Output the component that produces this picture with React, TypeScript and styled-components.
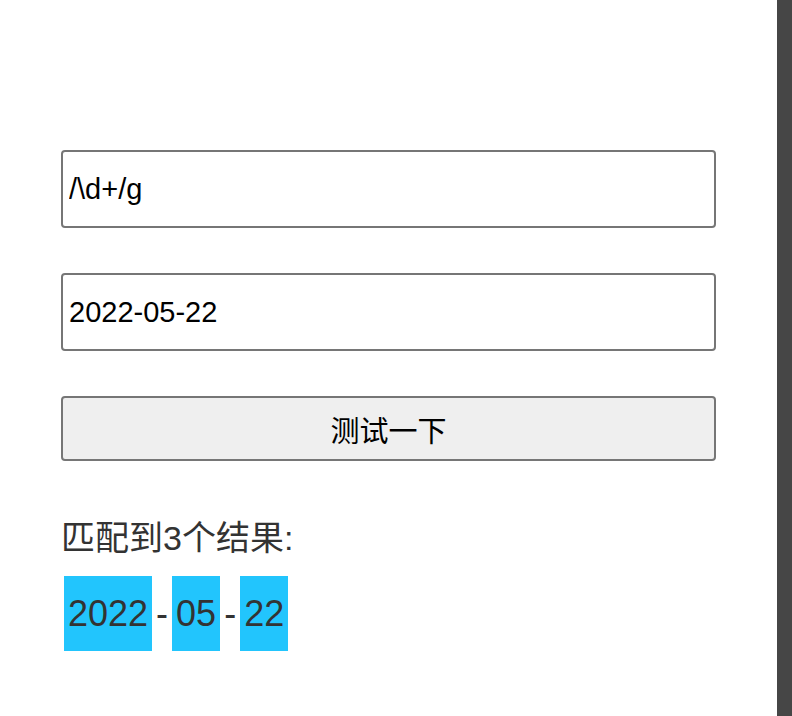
import React, { useState } from "react";
import styled, { createGlobalStyle } from "styled-components";

const Global = createGlobalStyle`
  html, body { margin: 0; padding: 0; background: #fff; }
  body { font-family: "Liberation Sans", "Noto Sans CJK SC", sans-serif; }
`;

const Page = styled.div`
  display: flex;
  height: 716px;
  overflow: hidden;
`;

const Main = styled.main`
  flex: 1;
  display: flex;
  justify-content: center;
  padding-top: 150px;
`;

const Column = styled.div`
  width: 655px;
  display: flex;
  flex-direction: column;
`;

const Form = styled.div`
  display: flex;
  flex-direction: column;
  gap: 45px;
`;

const Field = styled.input`
  box-sizing: border-box;
  height: 78px;
  width: 100%;
  border: 2px solid #767676;
  border-radius: 4px;
  padding: 0 6px;
  font-family: "Liberation Sans", "Noto Sans CJK SC", sans-serif;
  font-size: 29px;
  color: #000;
  background: #fff;
  outline: none;
`;

const Button = styled.button`
  box-sizing: border-box;
  height: 65px;
  width: 100%;
  border: 2px solid #767676;
  border-radius: 4px;
  background: #efefef;
  font-family: "Liberation Sans", "Noto Sans CJK SC", sans-serif;
  font-size: 29px;
  color: #000;
  cursor: pointer;
`;

const Heading = styled.div`
  margin-top: 57px;
  font-size: 34px;
  line-height: 40px;
  color: #333;
`;

const Matches = styled.div`
  margin-top: 18px;
  padding-left: 3px;
  display: flex;
  align-items: center;
  color: #333;
  font-size: 36px;
`;

const Hit = styled.span`
  display: inline-block;
  background: #22c5fd;
  height: 75px;
  line-height: 75px;
  padding: 0 4px;
`;

const Sep = styled.span`
  display: inline-block;
  width: 20px;
  text-align: center;
`;

const Bar = styled.div`
  width: 15px;
  background: #464646;
  flex-shrink: 0;
`;

export default function App() {
  const [pattern, setPattern] = useState("/\\d+/g");
  const [text, setText] = useState("2022-05-22");
  const parts = ["2022", "05", "22"];
  return (
    <Page>
      <Global />
      <Main>
        <Column>
          <Form>
            <Field value={pattern} onChange={(e) => setPattern(e.target.value)} />
            <Field value={text} onChange={(e) => setText(e.target.value)} />
            <Button>测试一下</Button>
          </Form>
          <Heading>匹配到3个结果:</Heading>
          <Matches>
            {parts.map((p, i) => (
              <React.Fragment key={i}>
                {i > 0 && <Sep>-</Sep>}
                <Hit>{p}</Hit>
              </React.Fragment>
            ))}
          </Matches>
        </Column>
      </Main>
      <Bar />
    </Page>
  );
}
